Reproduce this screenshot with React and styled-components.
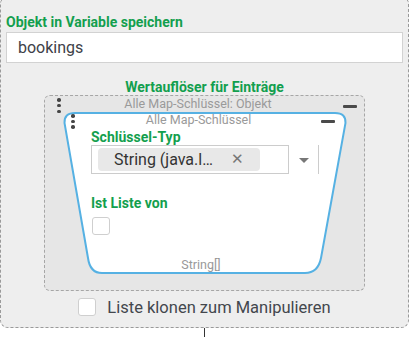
import React from "react";
import styled, { createGlobalStyle } from "styled-components";

const GlobalStyle = createGlobalStyle`
  body {
    margin: 0;
    background: #ffffff;
    font-family: "Roboto", "Liberation Sans", sans-serif;
    overflow: hidden;
  }
  * {
    box-sizing: border-box;
  }
`;

const green = "#139f4e";

const OuterPanel = styled.div`
  margin-top: -4px;
  width: 409px;
  background: #eeeeee;
  border: 1px dashed #9a9a9a;
  border-radius: 8px;
  padding: 17px 5px 11px 5px;
`;

const Label = styled.div`
  color: ${green};
  font-weight: 700;
  font-size: 14px;
  line-height: 16px;
  text-align: ${(p) => (p.$center ? "center" : "left")};
  margin-top: ${(p) => p.$top || 0}px;
`;

const TextInput = styled.div`
  margin-top: 2px;
  height: 31px;
  background: #ffffff;
  border: 1px solid #d2d2d2;
  padding-left: 11px;
  display: flex;
  align-items: center;
  font-size: 16px;
  color: #3d4148;
`;

const InnerPanel = styled.div`
  margin-left: 38px;
  width: 321px;
  background: #e6e6e6;
  border: 1px dashed #a6a6a6;
  border-radius: 6px;
  padding-bottom: 15px;
`;

const Header = styled.div`
  display: grid;
  grid-template-columns: ${(p) => p.$left}px 1fr ${(p) => p.$right}px;
  align-items: start;
  height: 15px;
`;

const Dots = styled.div`
  display: flex;
  flex-direction: column;
  gap: ${(p) => p.$gap}px;
  margin-top: ${(p) => p.$top}px;
  padding-left: ${(p) => p.$pad}px;
  span {
    width: 3.5px;
    height: 3.5px;
    border-radius: 50%;
    background: #454545;
  }
`;

const HeaderTitle = styled.div`
  text-align: center;
  font-size: 12.5px;
  line-height: 14px;
  color: #9a9a9a;
  padding-top: 1px;
  padding-right: ${(p) => p.$shift || 0}px;
  white-space: nowrap;
`;

const Minus = styled.div`
  width: ${(p) => p.$w}px;
  height: 2.5px;
  border-radius: 1px;
  background: #4a4a4a;
  margin-top: ${(p) => p.$top}px;
  margin-left: ${(p) => p.$left || 0}px;
`;

const Card = styled.div`
  position: relative;
  margin: 1px 0 0 18px;
  width: 284px;
  height: 163px;
`;

const CardShape = styled.svg`
  position: absolute;
  left: 0;
  top: 0;
  z-index: 0;
`;

const CardContent = styled.div`
  position: relative;
  z-index: 1;
  display: flex;
  flex-direction: column;
`;

const CardBody = styled.div`
  padding-left: 28px;
  display: flex;
  flex-direction: column;
`;

const SelectRow = styled.div`
  display: flex;
  align-items: center;
  height: 29px;
`;

const Control = styled.div`
  width: 198px;
  height: 29px;
  border: 1px solid #cccccc;
  background: #ffffff;
  display: flex;
  align-items: center;
  padding-left: 6px;
`;

const Chip = styled.div`
  height: 23px;
  display: flex;
  align-items: center;
  gap: 18px;
  padding: 0 16px;
  background: #e8e8e8;
  border-radius: 4px;
  font-size: 16px;
  color: #333333;
  white-space: nowrap;
`;

const ChipClose = styled.span`
  font-size: 15px;
  color: #777777;
  line-height: 1;
`;

const Indicator = styled.div`
  width: 29px;
  height: 29px;
  display: flex;
  align-items: center;
  justify-content: center;
  &::after {
    content: "";
    margin-top: 1px;
    border-left: 5.5px solid transparent;
    border-right: 5.5px solid transparent;
    border-top: 5.5px solid #777777;
  }
`;

const Separator = styled.div`
  width: 1px;
  height: 29px;
  background: #cccccc;
`;

const Checkbox = styled.div`
  width: ${(p) => p.$size}px;
  height: ${(p) => p.$size}px;
  border: 1px solid #cfcfcf;
  border-radius: 3px;
  background: #ffffff;
  margin-top: ${(p) => p.$top || 0}px;
  margin-left: ${(p) => p.$left || 0}px;
  flex-shrink: 0;
`;

const Footer = styled.div`
  text-align: center;
  font-size: 12.5px;
  line-height: 14px;
  color: #999999;
  margin-top: 23px;
  padding-right: 8px;
`;

const CloneRow = styled.div`
  margin-top: 7px;
  display: flex;
  align-items: center;
  justify-content: center;
  gap: 11px;
  font-size: 16.5px;
  color: #43474d;
  height: 18px;
`;

const Connector = styled.div`
  margin-left: 204px;
  width: 1px;
  height: 12px;
  background: #333333;
`;

function DotHandle({ gap, top, pad }) {
  return (
    <Dots $gap={gap} $top={top} $pad={pad}>
      <span />
      <span />
      <span />
    </Dots>
  );
}

export default function App() {
  return (
    <>
      <GlobalStyle />
      <OuterPanel>
        <Label>Objekt in Variable speichern</Label>
        <TextInput>bookings</TextInput>
        <Label $center $top={16}>
          Wertauflöser für Einträge
        </Label>
        <InnerPanel>
          <Header $left={17} $right={23}>
            <DotHandle gap={2.3} top={2} pad={12} />
            <HeaderTitle $shift={7}>Alle Map-Schlüssel: Objekt</HeaderTitle>
            <Minus $w={14} $top={9} $left={2} />
          </Header>
          <Card>
            <CardShape width="284" height="163" viewBox="0 0 284 163">
              <path
                d="M 12 1 H 272 Q 283 1 282.5 11 L 258 146 Q 255 161 242 161 H 39 Q 27 161 25 146 L 1.5 11 Q 1 1 12 1 Z"
                fill="#ffffff"
                stroke="#56b1e3"
                strokeWidth="2"
              />
            </CardShape>
            <CardContent>
              <Header $left={13} $right={26}>
                <DotHandle gap={2} top={2} pad={8} />
                <HeaderTitle>Alle Map-Schlüssel</HeaderTitle>
                <Minus $w={13.5} $top={8} />
              </Header>
              <CardBody>
                <Label $top={3} style={{ lineHeight: "15px" }}>
                  Schlüssel-Typ
                </Label>
                <SelectRow>
                  <Control>
                    <Chip>
                      <span>String (java.l…</span>
                      <ChipClose>✕</ChipClose>
                    </Chip>
                  </Control>
                  <Indicator />
                  <Separator />
                </SelectRow>
                <Label $top={21}>Ist Liste von</Label>
                <Checkbox $size={18} $top={6} $left={1} />
              </CardBody>
              <Footer>String[]</Footer>
            </CardContent>
          </Card>
        </InnerPanel>
        <CloneRow>
          <Checkbox $size={18} />
          <span>Liste klonen zum Manipulieren</span>
        </CloneRow>
      </OuterPanel>
      <Connector />
    </>
  );
}
